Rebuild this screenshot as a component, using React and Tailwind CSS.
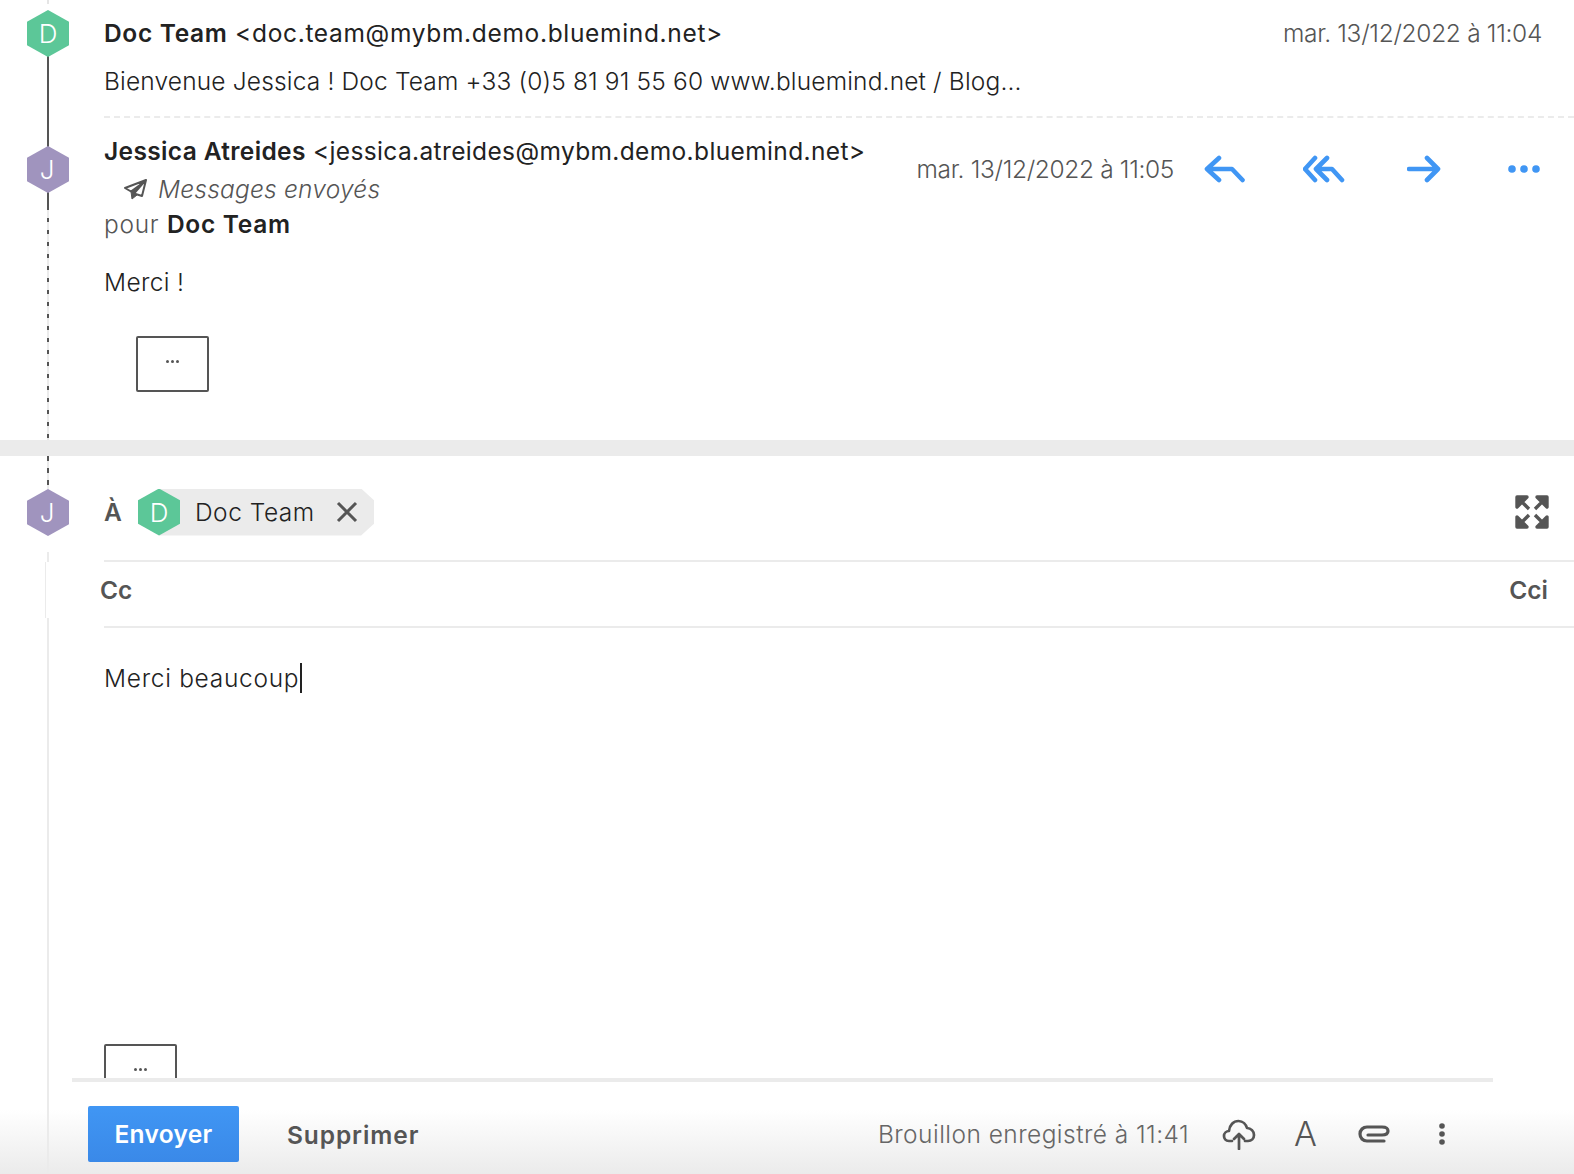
const font = { fontFamily: "Inter, 'Noto Sans', sans-serif" };

function Hex({ letter, color, className = "" }) {
  return (
    <div
      className={`flex h-[47px] w-[42px] shrink-0 items-center justify-center text-[26px] font-light text-white [clip-path:polygon(50%_0,100%_25%,100%_75%,50%_100%,0_75%,0_25%)] ${color} ${className}`}
    >
      {letter}
    </div>
  );
}

function ReplyIcon() {
  return (
    <svg width="42" height="28" viewBox="0 0 42 28" fill="none" stroke="#4096f4" strokeWidth="4.6" strokeLinecap="round" strokeLinejoin="round">
      <path d="M16 3 L4 14 L16 25 M4 14 H29 L39.5 25" />
    </svg>
  );
}

function ReplyAllIcon() {
  return (
    <svg width="44" height="28" viewBox="0 0 44 28" fill="none" stroke="#4096f4" strokeWidth="4.6" strokeLinecap="round" strokeLinejoin="round">
      <path d="M12 3 L2 14 L12 25 M24 3 L13 14 L24 25 M13 14 H29 L39 25" />
    </svg>
  );
}

function ForwardIcon() {
  return (
    <svg width="36" height="28" viewBox="0 0 36 28" fill="none" stroke="#4096f4" strokeWidth="4.6" strokeLinecap="round" strokeLinejoin="round">
      <path d="M2 14 H31 M20 3 L31 14 L20 25" />
    </svg>
  );
}

function DotsIcon() {
  return (
    <svg width="34" height="10" viewBox="0 0 34 10" fill="#4096f4">
      <circle cx="5" cy="5" r="3.8" />
      <circle cx="17" cy="5" r="3.8" />
      <circle cx="29" cy="5" r="3.8" />
    </svg>
  );
}

function PlaneIcon() {
  return (
    <svg width="23" height="21" viewBox="0 0 23 21" fill="none" stroke="#555" strokeWidth="2" strokeLinejoin="round">
      <path d="M22 1 L1 9 L7 12.5 L20 3 L10 14.5 L18 17 Z" />
      <path d="M7 12.5 L8 20 L13 16 L10 14.5 L14 9 Z" fill="#555" stroke="#555" strokeWidth="1" />
    </svg>
  );
}

function ExpandIcon() {
  return (
    <svg width="34" height="34" viewBox="0 0 34 34" fill="#555" stroke="#555" strokeWidth="3" strokeLinejoin="round">
      <path d="M2 2 H12 L2 12 Z M5 5 L14 14" strokeWidth="3.4" />
      <path d="M32 2 H22 L32 12 Z M29 5 L20 14" strokeWidth="3.4" />
      <path d="M2 32 H12 L2 22 Z M5 29 L14 20" strokeWidth="3.4" />
      <path d="M32 32 H22 L32 22 Z M29 29 L20 20" strokeWidth="3.4" />
    </svg>
  );
}

function CloudIcon() {
  return (
    <svg width="34" height="31" viewBox="0 0 34 31" fill="none" stroke="#555" strokeWidth="2.7" strokeLinecap="round" strokeLinejoin="round">
      <path d="M10 22 H7 C3.5 22 2 19.5 2 17 C2 14 4.5 12 7 12 C7.5 6 11.5 2 16.5 2 C21 2 24 5.5 25 9 C29 9 32 12.5 32 16 C32 19.5 29.5 22 26 22 H23" />
      <path d="M17 30 V15 M12 20 L17 15 L22 20" />
    </svg>
  );
}

function ClipIcon() {
  return (
    <svg width="32" height="20" viewBox="0 0 32 20" fill="none" stroke="#555" strokeWidth="3.2" strokeLinecap="round">
      <path d="M26 17 H9 C5 17 2 14 2 10 C2 6 5 3 9 3 H24 C27.5 3 30 4.5 30 7 C30 9.5 27.5 11 24 11 H10" />
    </svg>
  );
}

function MoreBox({ className }) {
  return (
    <div className={`flex w-[73px] justify-center rounded-[2px] border-2 border-[#555] ${className}`}>
      <span className="mt-[22px] flex gap-[2px]">
        <i className="size-[3px] rounded-full bg-[#555]" />
        <i className="size-[3px] rounded-full bg-[#555]" />
        <i className="size-[3px] rounded-full bg-[#555]" />
      </span>
    </div>
  );
}

export default function App() {
  return (
    <div style={font} className="relative flex h-[1174px] w-full flex-col overflow-hidden bg-white text-[24.5px] text-[#222]">
      {/* first message */}
      <section className="relative h-[118px] shrink-0 pl-[104px]">
        <div className="absolute left-[47px] top-0 h-[4px] w-[2px] bg-[#e5e5e5]" />
        <div className="absolute left-[47px] top-[50px] h-[100px] w-[2px] bg-[#555]" />
        <div className="absolute left-[27px] top-[10px]">
          <Hex letter="D" color="bg-[#5cc798]" />
        </div>
        <div className="flex h-[118px] flex-col border-b-2 border-dashed border-[#ebebeb] pt-[14px]">
          <div className="flex items-center justify-between pr-[32px]">
            <div className="leading-[38px] whitespace-nowrap tracking-[0.67px]">
              <span className="font-semibold">Doc Team</span> &lt;doc.team@mybm.demo.bluemind.net&gt;
            </div>
            <div className="text-[#555] font-light tracking-[-0.32px]">mar. 13/12/2022 à 11:04</div>
          </div>
          <div className="mt-[10px] leading-[38px] whitespace-nowrap tracking-[0.16px] font-light">
            Bienvenue Jessica ! Doc Team +33 (0)5 81 91 55 60 www.bluemind.net / Blog...
          </div>
        </div>
      </section>

      {/* second message */}
      <section className="relative h-[322px] shrink-0 pl-[104px]">
        <div className="absolute left-[47px] top-[60px] h-[34px] w-[2px] bg-[#555]" />
        <div className="absolute bottom-0 left-[47px] top-[92px] w-[2px] bg-[repeating-linear-gradient(to_bottom,#ebebeb_0,#ebebeb_8px,#555_8px,#555_12px)]" />
        <div className="absolute left-[27px] top-[28px]">
          <Hex letter="J" color="bg-[#a094be]" className="pr-[2px]" />
        </div>
        <div className="flex items-start justify-between pr-[33px] pt-[14px]">
          <div>
            <div className="leading-[38px] whitespace-nowrap tracking-[0.36px]">
              <span className="font-semibold">Jessica Atreides</span> &lt;jessica.atreides@mybm.demo.bluemind.net&gt;
            </div>
            <div className="flex h-[38px] items-center pl-[20px] italic font-light text-[#555] tracking-[0.2px]">
              <PlaneIcon />
              <span className="ml-[11px]">Messages envoyés</span>
            </div>
            <div className="-mt-[1px] leading-[34px] text-[#555] font-light tracking-[0.7px]">
              pour <span className="font-semibold text-[#222]">Doc Team</span>
            </div>
          </div>
          <div className="flex h-[74px] items-center">
            <div className="font-light text-[#555] tracking-[-0.35px] whitespace-nowrap">mar. 13/12/2022 à 11:05</div>
            <div className="ml-[29px]"><ReplyIcon /></div>
            <div className="ml-[58px]"><ReplyAllIcon /></div>
            <div className="ml-[60px]"><ForwardIcon /></div>
            <div className="ml-[64px]"><DotsIcon /></div>
          </div>
        </div>
        <div className="mt-[24px] leading-[34px] font-light tracking-[0.35px]">Merci !</div>
        <MoreBox className="ml-[32px] mt-[37px] h-[56px]" />
      </section>

      <div className="relative z-10 h-[16px] shrink-0 bg-[#ebebeb]" />

      {/* compose */}
      <section className="relative flex min-h-0 flex-1 flex-col">
        <div className="absolute left-[47px] top-0 h-[49px] w-[2px] bg-[repeating-linear-gradient(to_bottom,#555_0,#555_5px,#ebebeb_5px,#ebebeb_12px)]" />
        <div className="absolute left-[47px] top-[96px] h-[10px] w-[2px] bg-[#ebebeb]" />
        <div className="absolute bottom-0 left-[47px] top-[162px] w-[2px] bg-[#ebebeb]" />
        <div className="absolute left-[27px] top-[33px]">
          <Hex letter="J" color="bg-[#a094be]" className="pr-[2px]" />
        </div>

        <div className="ml-[104px] flex h-[106px] shrink-0 items-center border-b-2 border-[#ebebeb] pr-[25px] pt-[8px]">
          <span className="w-[34px] font-semibold text-[#555]">À</span>
          <Hex letter="D" color="bg-[#5cc798]" className="relative z-10" />
          <div className="-ml-[21px] flex h-[47px] w-[215px] items-center bg-[#ebebeb] pl-[36px] [clip-path:polygon(0_0,94%_0,100%_25%,100%_75%,94%_100%,0_100%)]">
            <span className="font-light whitespace-nowrap tracking-[0.5px]">Doc Team</span>
            <svg className="ml-[20px]" width="24" height="24" viewBox="0 0 24 24" fill="none" stroke="#555" strokeWidth="3">
              <path d="M3 3 L21 21 M21 3 L3 21" />
            </svg>
          </div>
          <div className="ml-auto"><ExpandIcon /></div>
        </div>

        <div className="relative ml-[104px] flex h-[66px] shrink-0 items-center justify-between border-b-2 border-[#ebebeb] pb-[8px] pr-[26px] font-semibold text-[#555]">
          <div className="absolute -left-[59px] top-0 h-[56px] w-[1px] bg-[#ebebeb]" />
          <span className="-ml-[4px]">Cc</span>
          <span>Cci</span>
        </div>

        <div className="ml-[104px] mt-[31px] flex h-[38px] shrink-0 items-center font-light tracking-[0.7px]">
          Merci beaucoup<span className="ml-[1px] h-[30px] w-[2px] bg-[#222]" />
        </div>

        <div className="ml-[104px] mt-[347px] h-[34px] overflow-hidden">
          <MoreBox className="h-[56px]" />
        </div>

        <div className="relative z-10 ml-[72px] h-[4px] w-[1421px] shrink-0 bg-[#ebebeb]" />

        <footer className="flex flex-1 items-start bg-gradient-to-b from-white from-30% to-[#ebebeb] pl-[88px] pt-[24px]">
          <button className="h-[56px] w-[151px] rounded-[2px] bg-gradient-to-b from-[#4096f4] to-[#3a89e8] text-[24.5px] font-semibold tracking-[0.3px] text-white">
            Envoyer
          </button>
          <button className="ml-[48px] h-[58px] text-[24.5px] font-semibold tracking-[0.9px] text-[#555]">Supprimer</button>
          <div className="ml-auto flex h-[56px] items-center pr-[128px] text-[#666] font-light">
            <span className="whitespace-nowrap tracking-[0.45px]">Brouillon enregistré à 11:41</span>
            <div className="ml-[33px]"><CloudIcon /></div>
            <span className="ml-[38px] text-[34px] leading-none font-light text-[#555]">A</span>
            <div className="ml-[41px]"><ClipIcon /></div>
            <svg className="ml-[48px]" width="8" height="24" viewBox="0 0 8 24" fill="#555">
              <circle cx="4" cy="4" r="2.8" />
              <circle cx="4" cy="12" r="2.8" />
              <circle cx="4" cy="20" r="2.8" />
            </svg>
          </div>
        </footer>
      </section>
    </div>
  );
}
